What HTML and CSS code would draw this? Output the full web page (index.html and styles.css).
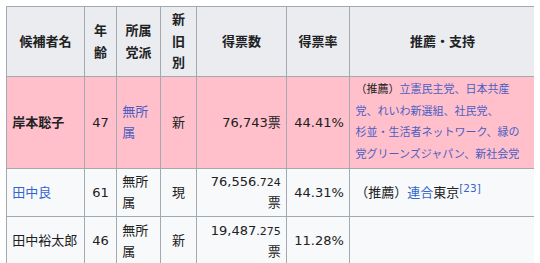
FILE: index.html
```html
<!DOCTYPE html>
<html lang="ja">
<head>
<meta charset="utf-8">
<title>選挙結果</title>
<link rel="stylesheet" href="styles.css">
</head>
<body>
<table class="wikitable">
  <colgroup>
    <col class="c-name">
    <col class="c-age">
    <col class="c-party">
    <col class="c-status">
    <col class="c-votes">
    <col class="c-rate">
    <col class="c-support">
  </colgroup>
  <thead>
    <tr>
      <th>候補者名</th>
      <th>年齢</th>
      <th>所属党派</th>
      <th>新旧別</th>
      <th>得票数</th>
      <th>得票率</th>
      <th>推薦・支持</th>
    </tr>
  </thead>
  <tbody>
    <tr class="winner">
      <td class="name"><b>岸本聡子</b></td>
      <td class="center">47</td>
      <td><a href="#">無所属</a></td>
      <td class="center">新</td>
      <td class="num">76,743票</td>
      <td class="num">44.41%</td>
      <td class="small">（推薦）<a href="#">立憲民主党</a><span class="link-sep">、</span><a href="#">日本共産党</a><span class="link-sep">、</span><a href="#">れいわ新選組</a><span class="link-sep">、</span><a href="#">社民党</a><span class="link-sep">、</span><a href="#" class="nowrap">杉並・生活者ネットワーク</a><span class="link-sep">、</span><a href="#">緑の党グリーンズジャパン</a><span class="link-sep">、</span><a href="#">新社会党</a></td>
    </tr>
    <tr>
      <td class="name"><a href="#">田中良</a></td>
      <td class="center">61</td>
      <td>無所属</td>
      <td class="center">現</td>
      <td class="num">76,556<span class="frac">.724</span>票</td>
      <td class="num">44.31%</td>
      <td>（推薦）<a href="#">連合</a>東京<sup class="ref"><a href="#">[23]</a></sup></td>
    </tr>
    <tr>
      <td class="name">田中裕太郎</td>
      <td class="center">46</td>
      <td>無所属</td>
      <td class="center">新</td>
      <td class="num">19,487<span class="frac">.275</span>票</td>
      <td class="num">11.28%</td>
      <td></td>
    </tr>
  </tbody>
</table>
</body>
</html>
```
FILE: styles.css
```css
html, body {
  background: #ffffff;
}
body {
  margin: 6px;
  font-family: "DejaVu Sans", "Noto Sans CJK JP", sans-serif;
  font-size: 13px;
  line-height: 21.5px;
  color: #202122;
}
.wikitable {
  border-collapse: collapse;
  table-layout: fixed;
  width: 530px;
  background: #f8f9fa;
  color: #202122;
}
.c-name { width: 78px; }
.c-age { width: 32px; }
.c-party { width: 44px; }
.c-status { width: 36px; }
.c-votes { width: 90px; }
.c-rate { width: 63px; }
.c-support { width: 186px; }
.wikitable th,
.wikitable td {
  border: 1px solid #a2a9b1;
  padding: 2.3px 5.2px;
  vertical-align: middle;
}
.wikitable th {
  background: #eaecf0;
  font-weight: bold;
  text-align: center;
}
.wikitable td {
  text-align: left;
}
.wikitable .center { text-align: center; }
.wikitable .num { text-align: right; }
.wikitable .small {
  font-size: 11px;
  padding-left: 5.6px;
}
.winner td {
  background: #ffc0cb;
}
a {
  color: #3366cc;
  text-decoration: none;
}
.winner a,
.winner .link-sep {
  color: #4a5ec4;
}
.nowrap { white-space: nowrap; }
.frac {
  font-size: 11px;
  line-height: 0;
}
.ref {
  font-size: 10.5px;
  line-height: 0;
  vertical-align: super;
}
.ref a { color: #3366cc; }
```
